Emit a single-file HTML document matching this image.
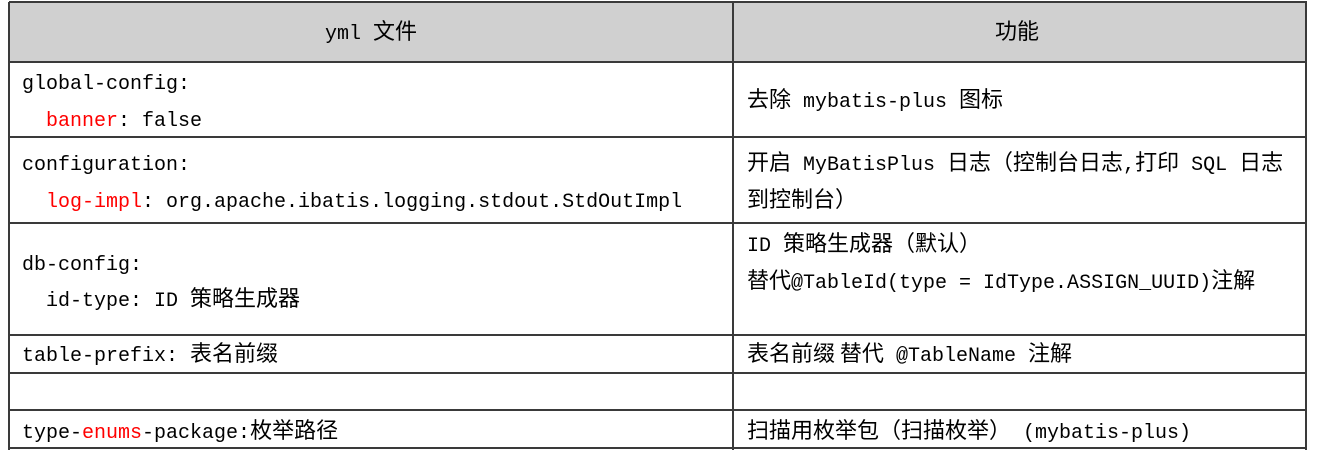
<!DOCTYPE html>
<html><head><meta charset="utf-8"><style>
html,body{margin:0;padding:0;background:#fff;width:1320px;height:473px;overflow:hidden}
body{position:relative;font-family:"Liberation Mono","WenQuanYi Zen Hei","Noto Sans CJK SC",monospace;font-size:20px;color:#000}
.hl{position:absolute;left:9px;width:1298px;height:2px;background:#3a3a3a}
.vl{position:absolute;top:2px;height:448px;width:2px;background:#3a3a3a}
.t{position:absolute;white-space:pre;line-height:24px;height:24px}
.r{color:#f00}
.c{font-size:22px;line-height:0;font-family:"WenQuanYi Zen Hei","Noto Sans CJK SC",sans-serif}
</style></head><body>
<div style="position:absolute;left:9px;top:2px;width:1298px;height:60px;background:#d0d0d0"></div>
<div class="hl" style="top:1px"></div>
<div class="hl" style="top:61px"></div>
<div class="hl" style="top:136px"></div>
<div class="hl" style="top:222px"></div>
<div class="hl" style="top:334px"></div>
<div class="hl" style="top:372px"></div>
<div class="hl" style="top:409px"></div>
<div class="hl" style="top:447px"></div>
<div class="vl" style="left:8px"></div>
<div class="vl" style="left:732px"></div>
<div class="vl" style="left:1305px"></div>

<div class="t" style="left:325px;top:23px">yml <span class="c">文件</span></div>
<div class="t" style="left:995px;top:23px"><span class="c">功能</span></div>

<div class="t" style="left:22px;top:73px">global-config:</div>
<div class="t" style="left:22px;top:110px">  <span class="r">banner</span>: false</div>
<div class="t" style="left:747px;top:91px"><span class="c">去除</span> mybatis-plus <span class="c">图标</span></div>

<div class="t" style="left:22px;top:154px">configuration:</div>
<div class="t" style="left:22px;top:191px">  <span class="r">log-impl</span>: org.apache.ibatis.logging.stdout.StdOutImpl</div>
<div class="t" style="left:747px;top:154px"><span class="c">开启</span> MyBatisPlus <span class="c">日志（控制台日志</span>,<span class="c">打印</span> SQL <span class="c">日志</span></div>
<div class="t" style="left:747px;top:191px"><span class="c">到控制台）</span></div>

<div class="t" style="left:22px;top:254px">db-config:</div>
<div class="t" style="left:22px;top:290px">  id-type: ID <span class="c">策略生成器</span></div>
<div class="t" style="left:747px;top:235px">ID <span class="c">策略生成器（默认）</span></div>
<div class="t" style="left:747px;top:272px"><span class="c">替代</span>@TableId(type = IdType.ASSIGN_UUID)<span class="c">注解</span></div>

<div class="t" style="left:22px;top:345px">table-prefix: <span class="c">表名前缀</span></div>
<div class="t" style="left:747px;top:345px"><span class="c">表名前缀 替代</span> @TableName <span class="c">注解</span></div>

<div class="t" style="left:22px;top:422px">type-<span class="r">enums</span>-package:<span class="c">枚举路径</span></div>
<div class="t" style="left:747px;top:422px"><span class="c">扫描用枚举包（扫描枚举）</span> (mybatis-plus)</div>
</body></html>
